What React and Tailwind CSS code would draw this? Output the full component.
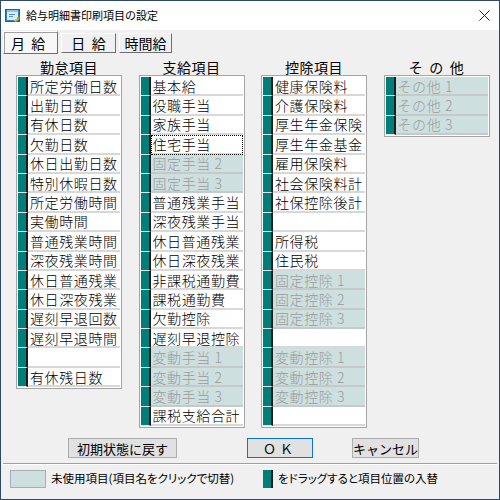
import React from "react";

const KINTAI = [
  ["所定労働日数"], ["出勤日数"], ["有休日数"], ["欠勤日数"], ["休日出勤日数"],
  ["特別休暇日数"], ["所定労働時間"], ["実働時間"], ["普通残業時間"], ["深夜残業時間"],
  ["休日普通残業"], ["休日深夜残業"], ["遅刻早退回数"], ["遅刻早退時間"], [""], ["有休残日数"],
];

const SHIKYU = [
  ["基本給"], ["役職手当"], ["家族手当"], ["住宅手当", false, true], ["固定手当 2", true],
  ["固定手当 3", true], ["普通残業手当"], ["深夜残業手当"], ["休日普通残業"], ["休日深夜残業"],
  ["非課税通勤費"], ["課税通勤費"], ["欠勤控除"], ["遅刻早退控除"], ["変動手当 1", true],
  ["変動手当 2", true], ["変動手当 3", true], ["課税支給合計"],
];

const KOJO = [
  ["健康保険料"], ["介護保険料"], ["厚生年金保険"], ["厚生年金基金"], ["雇用保険料"],
  ["社会保険料計"], ["社保控除後計"], [""], ["所得税"], ["住民税"], ["固定控除 1", true],
  ["固定控除 2", true], ["固定控除 3", true], [""], ["変動控除 1", true], ["変動控除 2", true],
  ["変動控除 3", true], [""],
];

const SONOTA = [["その他 1", true], ["その他 2", true], ["その他 3", true]];

function Row({ label, unused, focus }) {
  return (
    <div className="flex h-[19.4px]">
      <div className="w-[10px] shrink-0 bg-[#007f7a] border-r-2 border-r-[#1c1c1c] border-b border-b-[#e4e4e4]" />
      <div
        className={`flex-1 flex items-center pl-[2px] border-b-2 text-[14px] font-light tracking-[0.6px] leading-none whitespace-pre overflow-hidden ${
          unused ? "bg-[#cddfdf] text-[#9b9b9b] border-[#c4c9c9]" : "bg-white text-black border-[#d8d8d8]"
        } ${focus ? "outline-1 outline-dotted outline-black -outline-offset-1" : ""}`}
      >
        {label}
      </div>
    </div>
  );
}

function Column({ title, rows }) {
  return (
    <div className="w-[106px] flex flex-col">
      <div className="h-[17px] flex items-center justify-center gap-[6px] text-[14px] tracking-[0.5px] leading-none">
        {title.map((t, i) => (
          <span key={i}>{t}</span>
        ))}
      </div>
      <div className="border border-[#a5a5a5] bg-white p-[1px]">
        {rows.map(([label, unused, focus], i) => (
          <Row key={i} label={label} unused={unused} focus={focus} />
        ))}
      </div>
    </div>
  );
}

export default function App() {
  return (
    <div className="w-[500px] h-[500px] bg-white overflow-hidden font-['Noto_Sans_CJK_JP',sans-serif] text-black">
      <div className="w-full h-full flex flex-col border border-[#2f4a66] bg-[#f0f0f0]">
        {/* title bar */}
        <div className="h-[29px] bg-white flex items-center pl-[4px] pr-[9px]">
          <svg width="15" height="13" viewBox="0 0 15 13">
            <rect x="0.5" y="0.5" width="14" height="12" fill="#2e7fd0" stroke="#1d5ea8" />
            <rect x="2" y="3" width="11" height="8" fill="#d8ecfb" />
            <rect x="2" y="1.5" width="11" height="1" fill="#ffffff" />
            <rect x="4" y="5" width="6" height="1" fill="#5a8cc4" />
            <rect x="4" y="7" width="4" height="1" fill="#5a8cc4" />
            <path d="M9 12 L13 8 L14.5 9.5 L10.5 13 Z" fill="#e0c020" />
            <path d="M12 9 L14 7 L15 8 L13 10 Z" fill="#5cb030" />
          </svg>
          <span className="ml-[6px] text-[11px] leading-none">給与明細書印刷項目の設定</span>
          <div className="flex-1" />
          <svg width="11" height="11" viewBox="0 0 11 11">
            <path d="M0.5 0.5 L10.5 10.5 M10.5 0.5 L0.5 10.5" stroke="#222" strokeWidth="1" />
          </svg>
        </div>

        {/* tabs */}
        <div className="flex items-start pl-[2px] pt-[1px] h-[24px] text-[14px] leading-none">
          <div className="w-[55px] h-[23px] flex items-center pl-[7px] bg-[#f7f7f7] border border-t-white border-l-white border-r-[#6e6e6e] border-b-[#6e6e6e] shadow-[inset_1px_1px_0_#a0a0a0] whitespace-pre">
            月  給
          </div>
          <div className="ml-[3px] mt-[2px] w-[55px] h-[20px] flex items-center justify-center bg-[#f0f0f0] border border-t-white border-l-white border-r-[#6e6e6e] border-b-[#6e6e6e] whitespace-pre">
            日  給
          </div>
          <div className="ml-[3px] mt-[2px] w-[53px] h-[20px] flex items-center justify-center bg-[#f0f0f0] border border-t-white border-l-white border-r-[#6e6e6e] border-b-[#6e6e6e]">
            時間給
          </div>
        </div>

        {/* columns */}
        <div className="flex items-start pl-[15px] pt-[4px] gap-[16.5px]">
          <Column title={["勤怠項目"]} rows={KINTAI} />
          <Column title={["支給項目"]} rows={SHIKYU} />
          <Column title={["控除項目"]} rows={KOJO} />
          <Column title={["そ", "の", "他"]} rows={SONOTA} />
        </div>

        {/* buttons */}
        <div className="flex items-center pl-[67px] mt-[10px] text-[13px] leading-none">
          <button className="w-[109px] h-[20px] bg-[#e1e1e1] border border-[#adadad]">初期状態に戻す</button>
          <button className="ml-[70px] w-[66px] h-[20px] bg-[#e1e1e1] border-[1.5px] border-[#0a74d6] tracking-[4px]">ＯＫ</button>
          <button className="ml-[39px] w-[67px] h-[20px] bg-[#e1e1e1] border border-[#adadad]">キャンセル</button>
        </div>

        {/* separator */}
        <div className="mt-[5px] mx-[2px] h-[2px] border-t border-[#a0a0a0] border-b border-b-white" />

        {/* legend */}
        <div className="flex items-center pl-[9px] mt-[4px] h-[20px] text-[11.5px] leading-none [font-feature-settings:'palt']">
          <div className="w-[253px] flex items-center">
            <div className="w-[36px] h-[18px] bg-[#cddfdf] border border-[#a5b0b0]" />
            <span className="ml-[5px] whitespace-nowrap">未使用項目(項目名をクリックで切替)</span>
          </div>
          <div className="w-[10px] h-[18px] bg-[#007f7a] border-r-2 border-r-[#1c1c1c]" />
          <span className="ml-[5px] whitespace-nowrap">をドラッグすると項目位置の入替</span>
        </div>
      </div>
    </div>
  );
}
